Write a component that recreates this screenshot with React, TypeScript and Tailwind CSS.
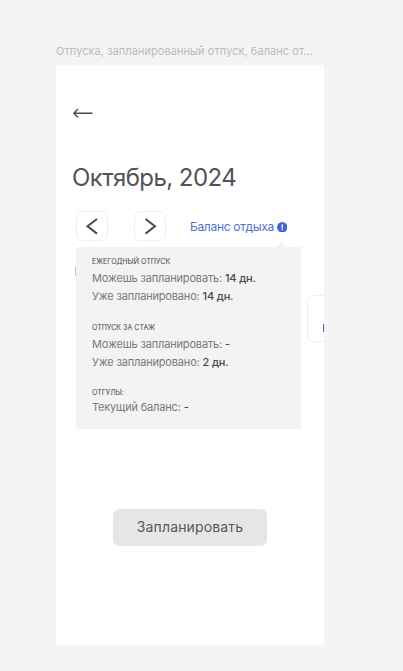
type Row = { label: string; value: string };

function BalanceSection({ title, rows, className, gap }: { title: string; rows: Row[]; className: string; gap: string }) {
  return (
    <section className={className}>
      <h2 className="h-[10px] text-[7px] leading-[10px] tracking-[0.04px] whitespace-nowrap text-[#3f4144]">{title}</h2>
      <div className={gap}>
        {rows.map((row) => (
          <p key={row.label} className="h-[18px] text-[11px] leading-[18px] tracking-[-0.17px] whitespace-nowrap text-[#77797c]">
            {row.label} <span className="font-medium text-[#46484b]">{row.value}</span>
          </p>
        ))}
      </div>
    </section>
  );
}

function BalancePopover() {
  return (
    <aside className="absolute top-[182px] left-5 h-[182px] w-[225px] bg-[#f3f3f3] pt-[10px] pl-4">
      <svg className="absolute -top-[6px] left-[200px]" width="12" height="6" viewBox="0 0 12 6">
        <path d="M1 6L4.8 1.2Q5.5 0.4 6.2 1.2L10 6Z" fill="#f3f3f3" />
      </svg>
      <BalanceSection
        className="h-[66px]"
        gap="pt-[2px]"
        title="ЕЖЕГОДНЫЙ ОТПУСК"
        rows={[
          { label: "Можешь запланировать:", value: "14 дн." },
          { label: "Уже запланировано:", value: "14 дн." },
        ]}
      />
      <BalanceSection
        className="h-[65px]"
        gap="pt-[2px]"
        title="ОТПУСК ЗА СТАЖ"
        rows={[
          { label: "Можешь запланировать:", value: "-" },
          { label: "Уже запланировано:", value: "2 дн." },
        ]}
      />
      <BalanceSection className="" gap="" title="ОТГУЛЫ:" rows={[{ label: "Текущий баланс:", value: "-" }]} />
    </aside>
  );
}

function MonthButton({ label, path }: { label: string; path: string }) {
  return (
    <button aria-label={label} className="flex h-[30px] w-8 items-center justify-center rounded-md border border-[#f0f0f0] bg-white">
      <svg width="14" height="18" viewBox="0 0 14 18" fill="none" stroke="#484b50" strokeWidth="2">
        <path d={path} />
      </svg>
    </button>
  );
}

export default function App() {
  return (
    <div className="h-[671px] w-[403px] overflow-hidden bg-[#f4f4f4] pt-11 pl-14 font-[Inter,'Liberation_Sans',sans-serif]">
      <p className="h-[21px] text-[11px] leading-[14px] tracking-[0.045px] whitespace-nowrap text-[#bababa]">
        Отпуска, запланированный отпуск, баланс от...
      </p>
      <main className="relative h-[580px] w-[268px] overflow-hidden bg-white">
        <header className="pt-[42px] pl-4">
          <svg className="block" width="22" height="12" viewBox="0 0 22 12" fill="none" stroke="#484b50" strokeWidth="1.4" strokeLinecap="round" strokeLinejoin="round">
            <path d="M20 6.3H1.8M5.5 2.5L1.8 6.3L5.5 10.1" />
          </svg>
          <h1 className="mt-[43px] h-8 text-[24px] leading-8 tracking-[-0.55px] whitespace-nowrap text-[#505358]">Октябрь, 2024</h1>
        </header>

        <div className="mt-[17px] flex h-[30px] items-center pl-[19.5px]">
          <div className="flex gap-[26.5px]">
            <MonthButton label="Предыдущий месяц" path="M12 2L2.5 9.3L12 16.6" />
            <MonthButton label="Следующий месяц" path="M2.5 2L12 9.3L2.5 16.6" />
          </div>
          <div className="mt-[2px] ml-6 flex items-center gap-[3px]">
            <span className="text-[12px] leading-4 tracking-[-0.31px] whitespace-nowrap text-[#506ed4]">Баланс отдыха</span>
            <svg width="10.5" height="10.5" viewBox="0 0 10 10">
              <circle cx="5" cy="5" r="5" fill="#4164db" />
              <path d="M5 2.2V6M5 6.5V7.8" stroke="white" strokeWidth="1.2" />
            </svg>
          </div>
        </div>

        <div className="mt-[26px] flex h-[75px] justify-between pl-[19px]">
          <div className="h-[9px] w-px bg-[#c6c6c7]" />
          <div className="-mr-[7px] mt-7 flex h-[47px] w-6 items-center rounded-md border border-[#f0f0f0] pl-[15px]">
            <div className="mt-[18px] h-2 w-px bg-[#4859aa]" />
          </div>
        </div>

        <button className="mt-[167px] ml-[57px] flex h-[37px] w-[154px] items-center justify-center rounded-md bg-[#e6e6e6] pb-[2px] text-[14px] tracking-[0.15px] text-[#55585c]">
          Запланировать
        </button>
        <BalancePopover />
      </main>
    </div>
  );
}
